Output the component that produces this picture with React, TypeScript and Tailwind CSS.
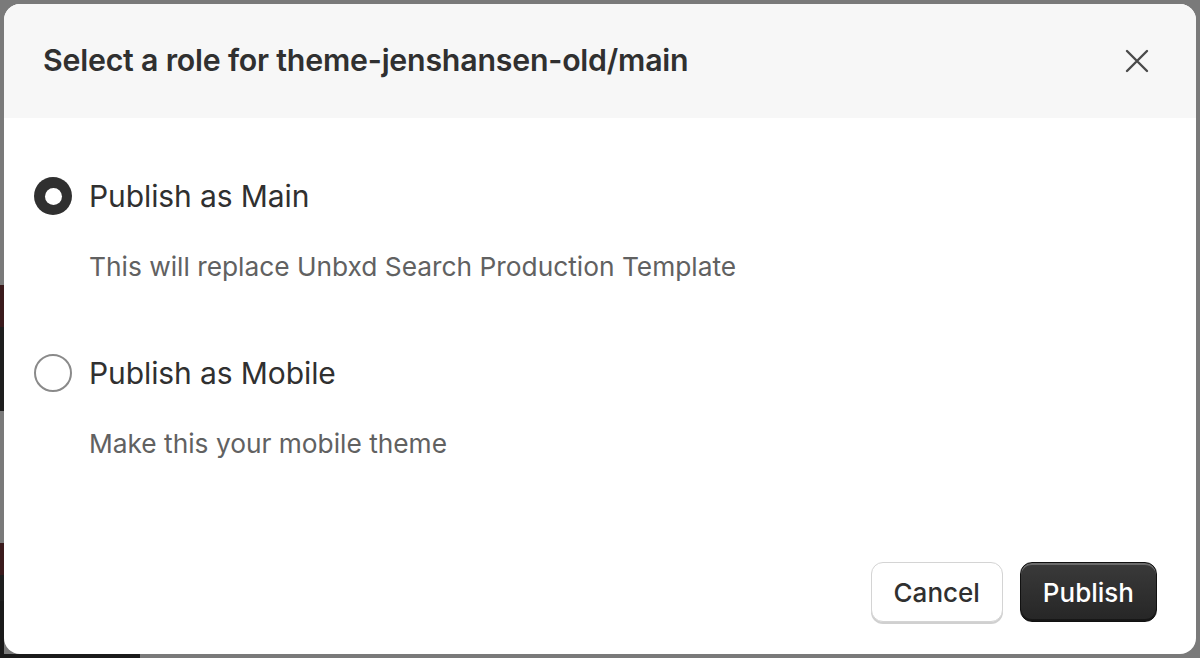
import { useState } from 'react';

const options = [
  { id: 'main', label: 'Publish as Main', hint: 'This will replace Unbxd Search Production Template' },
  { id: 'mobile', label: 'Publish as Mobile', hint: 'Make this your mobile theme' },
];

const Radio = ({ checked }: { checked: boolean }) =>
  checked ? (
    <span className="w-[38px] h-[38px] rounded-full bg-[#303030] flex items-center justify-center shrink-0">
      <span className="w-[17px] h-[17px] rounded-full bg-white"></span>
    </span>
  ) : (
    <span className="w-[38px] h-[38px] rounded-full border-2 border-[#8a8a8a] bg-white shrink-0"></span>
  );

const App = () => {
  const [role, setRole] = useState('main');

  return (
    <div className="relative w-[1200px] h-[658px] bg-[#7a7a7a] overflow-hidden font-['Inter',sans-serif]">
      {/* Page behind the overlay */}
      <div className="flex flex-col w-[4px] h-full">
        <div className="h-[285px]"></div>
        <div className="h-[42px] bg-[#3a1a1c]"></div>
        <div className="h-[84px] bg-[#1e1e1e]"></div>
        <div className="h-[132px]"></div>
        <div className="h-[32px] bg-[#3a1a1c]"></div>
        <div className="h-[26px] bg-[#1e1e1e]"></div>
        <div className="flex-1 bg-[#1a1a1a]"></div>
      </div>
      <div className="absolute left-0 bottom-0 w-[140px] h-[4px] bg-[#1a1a1a]"></div>

      {/* Modal */}
      <div className="absolute left-[4px] top-[4px] w-[1192px] h-[650px] bg-white rounded-[16px] overflow-hidden flex flex-col">
        <div className="h-[114px] shrink-0 bg-[#f7f7f7] flex items-center justify-between pl-[39px] pr-[44px]">
          <h1 className="text-[30.3px] font-semibold text-[#303030] tracking-[-0.2px]">
            Select a role for theme-jenshansen-old/main
          </h1>
          <button className="w-[30px] h-[30px] flex items-center justify-center text-[#4a4a4a]">
            <svg width="24" height="24" viewBox="0 0 24 24" fill="none" stroke="currentColor" strokeWidth="2.4" strokeLinecap="round">
              <path d="M2 2L22 22M22 2L2 22" />
            </svg>
          </button>
        </div>

        <div className="flex flex-col gap-[67px] pl-[30px] pt-[55px]">
          {options.map((o) => (
            <div key={o.id} className="flex flex-col cursor-pointer" onClick={() => setRole(o.id)}>
              <div className="flex items-center gap-[17px] h-[46px]">
                <Radio checked={role === o.id} />
                <span className="text-[30px] text-[#303030] tracking-[-0.1px]">{o.label}</span>
              </div>
              <p className="pl-[55px] mt-[32px] text-[26.3px] leading-[32px] text-[#616161]">{o.hint}</p>
            </div>
          ))}
        </div>

        <div className="mt-auto flex justify-end gap-[17px] pr-[39px] pb-[32px]">
          <button className="h-[60px] px-[22px] rounded-[12px] bg-white border border-[#d4d4d4] shadow-[0_2px_0_#d0d0d0] text-[26px] font-[550] text-[#303030]">
            Cancel
          </button>
          <button className="h-[60px] px-[22px] rounded-[12px] bg-gradient-to-b from-[#3a3a3a] to-[#262626] border border-[#111] shadow-[inset_0_2px_0_rgba(255,255,255,0.25),inset_0_-2px_0_rgba(0,0,0,0.4)] text-[26px] font-[550] text-white">
            Publish
          </button>
        </div>
      </div>
    </div>
  );
};

export default App;
